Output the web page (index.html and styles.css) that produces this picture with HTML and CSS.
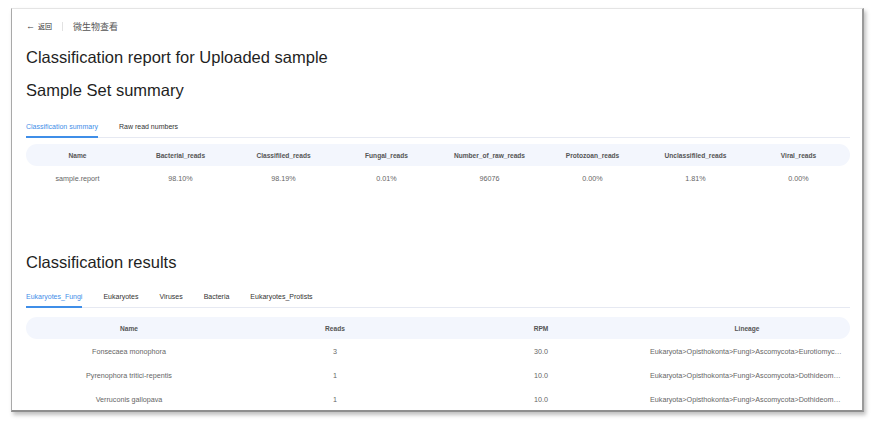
FILE: index.html
```html
<html lang="zh">
<head>
  <meta charset="utf-8">
  <link rel="stylesheet" href="styles.css">
</head>
<body>
  <div class="window">
    <div class="crumbs">
      <span class="arrow">&larr;</span>
      <span class="back">返回</span>
      <span class="sep"></span>
      <span class="here">微生物查看</span>
    </div>

    <h1 class="title">Classification report for Uploaded sample</h1>
    <h2 class="subtitle">Sample Set summary</h2>

    <div class="tabs">
      <span class="tab active">Classification summary</span>
      <span class="tab">Raw read numbers</span>
    </div>

    <table class="grid summary">
      <tr class="head">
        <th>Name</th>
        <th>Bacterial_reads</th>
        <th>Classifiled_reads</th>
        <th>Fungal_reads</th>
        <th>Number_of_raw_reads</th>
        <th>Protozoan_reads</th>
        <th>Unclassifiled_reads</th>
        <th>Viral_reads</th>
      </tr>
      <tr>
        <td>sample.report</td>
        <td>98.10%</td>
        <td>98.19%</td>
        <td>0.01%</td>
        <td>96076</td>
        <td>0.00%</td>
        <td>1.81%</td>
        <td>0.00%</td>
      </tr>
    </table>

    <h2 class="subtitle results">Classification results</h2>

    <div class="tabs">
      <span class="tab active">Eukaryotes_Fungi</span>
      <span class="tab">Eukaryotes</span>
      <span class="tab">Viruses</span>
      <span class="tab">Bacteria</span>
      <span class="tab">Eukaryotes_Protists</span>
    </div>

    <table class="grid results-table">
      <tr class="head">
        <th>Name</th>
        <th>Reads</th>
        <th>RPM</th>
        <th>Lineage</th>
      </tr>
      <tr>
        <td>Fonsecaea monophora</td>
        <td>3</td>
        <td>30.0</td>
        <td class="lineage">Eukaryota&gt;Opisthokonta&gt;Fungi&gt;Ascomycota&gt;Eurotiomycetes&gt;Chaetothyriales</td>
      </tr>
      <tr>
        <td>Pyrenophora tritici-repentis</td>
        <td>1</td>
        <td>10.0</td>
        <td class="lineage">Eukaryota&gt;Opisthokonta&gt;Fungi&gt;Ascomycota&gt;Dothideomycetes&gt;Pleosporales</td>
      </tr>
      <tr>
        <td>Verruconis gallopava</td>
        <td>1</td>
        <td>10.0</td>
        <td class="lineage">Eukaryota&gt;Opisthokonta&gt;Fungi&gt;Ascomycota&gt;Dothideomycetes&gt;Venturiales</td>
      </tr>
    </table>
  </div>
</body>
</html>
```

FILE: styles.css
```css
body {
    margin: 0;
    background: #ffffff;
    font-family: "Liberation Sans", Arial, "Noto Sans CJK SC", sans-serif;
    color: #262626;
}

.window {
    margin: 8px 0 0 11px;
    width: 853px;
    height: 404px;
    box-sizing: border-box;
    padding: 0 12px 0 14px;
    background: #ffffff;
    border-top: 1px solid #e4e4e4;
    border-left: 1px solid #a9a9a9;
    border-right: 2px solid #9a9a9a;
    border-bottom: 2px solid #8e8e8e;
    box-shadow: 2px 3px 4px rgba(0, 0, 0, 0.25);
    overflow: hidden;
}

.crumbs {
    display: flex;
    align-items: center;
    height: 16px;
    margin-top: 9px;
    font-size: 9px;
    color: #555555;
}

.crumbs .arrow {
    font-size: 9px;
    color: #444444;
    margin-right: 3px;
}

.crumbs .back {
    font-size: 7px;
    color: #333333;
}

.crumbs .sep {
    width: 1px;
    height: 9px;
    background: #e2e2e2;
    margin: 0 10px;
}

.title {
    margin: 12px 0 0 0;
    font-size: 16.5px;
    font-weight: normal;
    line-height: 22px;
    color: #1f1f1f;
}

.subtitle {
    margin: 11px 0 0 0;
    font-size: 16.5px;
    font-weight: normal;
    line-height: 22px;
    color: #1f1f1f;
}

.subtitle.results {
    margin-top: 61px;
}

.tabs {
    display: flex;
    margin-top: 16px;
    border-bottom: 1px solid #e6e9f2;
    font-size: 7px;
    color: #333333;
}

.results + .tabs {
    margin-top: 14px;
}

.tab {
    padding: 6px 0 6px 0;
    margin-right: 21px;
    border-bottom: 2px solid transparent;
    margin-bottom: -1px;
}

.tab.active {
    color: #3f8ee8;
    border-bottom-color: #3f8ee8;
}

.grid {
    width: 100%;
    border-collapse: separate;
    border-spacing: 0;
    table-layout: fixed;
    margin-top: 6px;
    font-size: 7.2px;
    color: #666666;
}

.grid th {
    height: 22px;
    padding: 0;
    background: #f3f6fd;
    font-weight: bold;
    font-size: 6.6px;
    color: #555555;
}

.grid th:first-child {
    border-radius: 11px 0 0 11px;
}

.grid th:last-child {
    border-radius: 0 11px 11px 0;
}

.grid td {
    height: 24px;
    padding: 0 6px;
    text-align: center;
    white-space: nowrap;
    overflow: hidden;
    text-overflow: ellipsis;
}

.results-table {
    margin-top: 9px;
}
```
